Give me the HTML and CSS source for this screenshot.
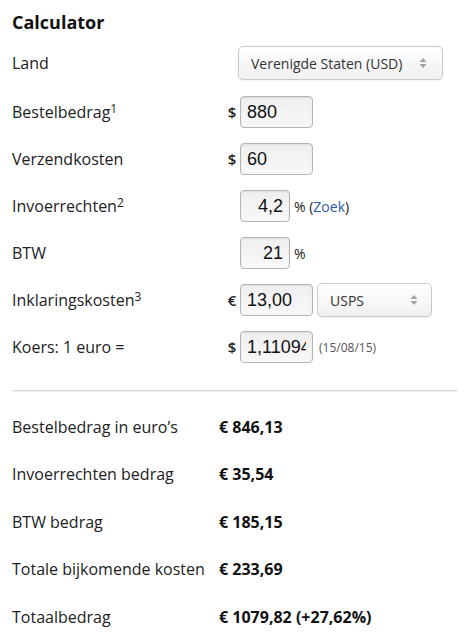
FILE: index.html
```html
<!DOCTYPE html>
<html lang="nl">

<head>
    <meta charset="UTF-8">
    <meta name="viewport" content="width=device-width, initial-scale=1.0">
    <title>Calculator</title>
    <link rel="stylesheet" href="styles.css">
</head>

<body>
    <div class="calc">
        <h1>Calculator</h1>

        <!-- Invoer -->
        <div class="form">
            <div class="row row-land">
                <label for="land">Land</label>
                <span class="unit"></span>
                <div class="select-wrap select-land">
                    <select id="land">
                        <option>Verenigde Staten (USD)</option>
                    </select>
                    <svg class="arrows" width="8" height="12" viewBox="0 0 8 12">
                        <path d="M4 1 L7.5 5 L0.5 5 Z" fill="#a3a3a3" />
                        <path d="M4 11 L7.5 7 L0.5 7 Z" fill="#a3a3a3" />
                    </svg>
                </div>
            </div>

            <div class="row">
                <label for="bedrag">Bestelbedrag<sup>1</sup></label>
                <span class="unit">$</span>
                <input type="text" id="bedrag" class="field" value="880">
            </div>

            <div class="row">
                <label for="verzend">Verzendkosten</label>
                <span class="unit">$</span>
                <input type="text" id="verzend" class="field" value="60">
            </div>

            <div class="row">
                <label for="invoer">Invoerrechten<sup>2</sup></label>
                <span class="unit"></span>
                <input type="text" id="invoer" class="field field-small" value="4,2">
                <span class="after">% (<a href="#">Zoek</a>)</span>
            </div>

            <div class="row">
                <label for="btw">BTW</label>
                <span class="unit"></span>
                <input type="text" id="btw" class="field field-small" value="21">
                <span class="after">%</span>
            </div>

            <div class="row">
                <label for="inklaring">Inklaringskosten<sup>3</sup></label>
                <span class="unit">€</span>
                <input type="text" id="inklaring" class="field" value="13,00">
                <div class="select-wrap select-carrier">
                    <select>
                        <option>USPS</option>
                    </select>
                    <svg class="arrows" width="8" height="12" viewBox="0 0 8 12">
                        <path d="M4 1 L7.5 5 L0.5 5 Z" fill="#a3a3a3" />
                        <path d="M4 11 L7.5 7 L0.5 7 Z" fill="#a3a3a3" />
                    </svg>
                </div>
            </div>

            <div class="row">
                <label for="koers">Koers: 1 euro =</label>
                <span class="unit">$</span>
                <input type="text" id="koers" class="field" value="1,11094">
                <span class="date">(15/08/15)</span>
            </div>
        </div>

        <hr>

        <!-- Uitkomst -->
        <div class="results">
            <span>Bestelbedrag in euro’s</span>
            <strong>€ 846,13</strong>

            <span>Invoerrechten bedrag</span>
            <strong>€ 35,54</strong>

            <span>BTW bedrag</span>
            <strong>€ 185,15</strong>

            <span>Totale bijkomende kosten</span>
            <strong>€ 233,69</strong>

            <span>Totaalbedrag</span>
            <strong>€ 1079,82 (+27,62%)</strong>
        </div>
    </div>
</body>
</html>
```

FILE: styles.css
```css
* {
    margin: 0;
    padding: 0;
    box-sizing: border-box;
}

body {
    background-color: #ffffff;
    font-family: "Open Sans", Arial, sans-serif;
    color: #222222;
}

.calc {
    padding: 0 18px 0 12px;
}

h1 {
    font-size: 18px;
    line-height: 24px;
    font-weight: bold;
    color: #111111;
    margin: 10px 0 12px;
}

.form {
    display: flex;
    flex-direction: column;
    gap: 15px;
}

.row {
    display: flex;
    align-items: center;
    height: 32px;
}

.row-land {
    height: 34px;
    margin-bottom: 1px;
}

.row label {
    width: 212px;
    font-size: 16px;
    line-height: 22px;
}

sup {
    font-size: 12px;
    line-height: 0;
    vertical-align: 5px;
}

.unit {
    width: 16px;
    font-size: 15px;
    font-weight: 600;
    text-align: center;
    color: #222222;
}

.field {
    width: 73px;
    height: 32px;
    padding: 0 6px;
    font-family: "Liberation Sans", Arial, sans-serif;
    font-size: 18px;
    color: #111111;
    background: linear-gradient(#efefef, #f8f8f8);
    border: 1px solid #b4b4b4;
    border-radius: 4px;
    box-shadow: inset 0 1px 2px rgba(0, 0, 0, 0.08);
    outline: none;
}

.field-small {
    width: 50px;
    text-align: right;
}

.after {
    margin-left: 4px;
    font-size: 14px;
}

.after a {
    color: #2f5aa8;
    text-decoration: none;
}

.date {
    margin-left: 6px;
    font-size: 12px;
    color: #555555;
}

.select-wrap {
    position: relative;
    height: 34px;
}

.select-wrap select {
    appearance: none;
    -webkit-appearance: none;
    width: 100%;
    height: 100%;
    padding: 0 12px;
    font-family: "Open Sans", Arial, sans-serif;
    font-size: 14px;
    color: #333333;
    background: linear-gradient(#ffffff, #f0f0f0);
    border: 1px solid #c9c9c9;
    border-radius: 5px;
    box-shadow: 0 1px 1px rgba(0, 0, 0, 0.05);
    outline: none;
}

.select-wrap .arrows {
    position: absolute;
    right: 16px;
    top: 11px;
}

.select-land {
    width: 205px;
    margin-left: -2px;
}

.select-carrier {
    width: 115px;
    margin-left: 4px;
}

.select-carrier .arrows {
    right: 14px;
}

hr {
    border: 0;
    height: 1px;
    background-color: #d9d9d9;
    box-shadow: 0 1px 1px #ececec;
    margin: 27px 0 12px;
}

.results {
    display: grid;
    grid-template-columns: 207px auto;
    grid-auto-rows: 47.5px;
    align-items: center;
    font-size: 16px;
}

.results strong {
    font-weight: bold;
    color: #111111;
}
```
